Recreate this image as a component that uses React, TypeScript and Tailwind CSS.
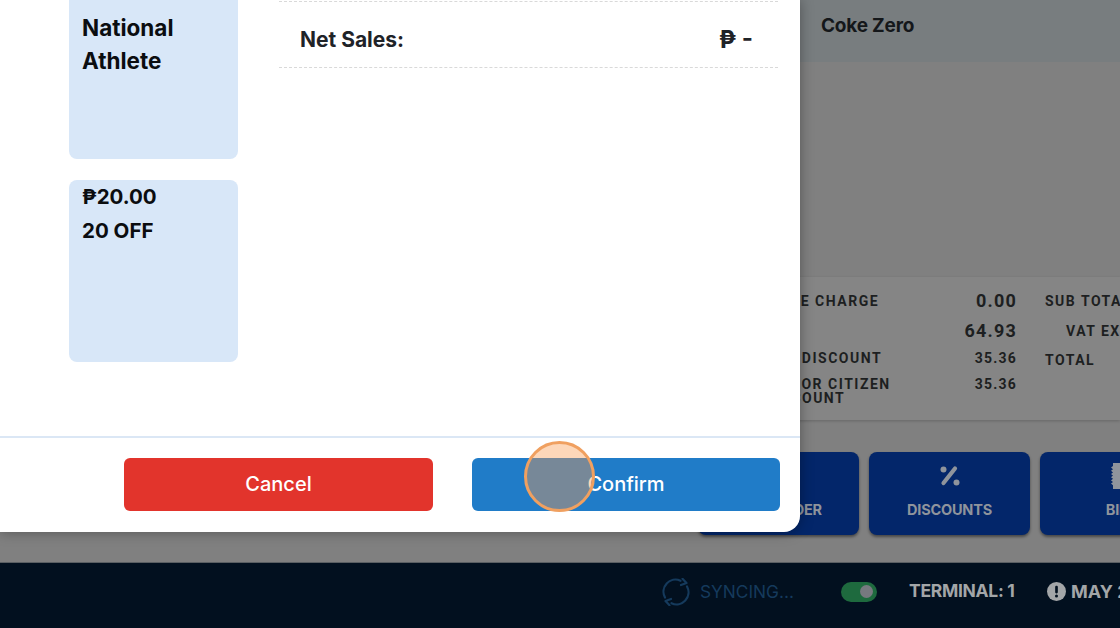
import React from 'react';

const ActionButton: React.FC<{ label: string; icon?: React.ReactNode }> = ({ label, icon }) => (
  <div className="w-[161px] h-[83px] shrink-0 rounded-lg bg-[#03266a] shadow-[0_2px_3px_rgba(0,0,0,0.45)] flex flex-col items-center pt-[11px] gap-[12px]">
    <div className="h-[26px] flex items-center justify-center text-[#8f949c]">{icon}</div>
    <span className="text-[14.5px] leading-[18px] font-bold tracking-[-0.2px] text-[#8f949c] whitespace-nowrap">{label}</span>
  </div>
);

const SummaryRow: React.FC<{ label: React.ReactNode; value: string; big?: boolean; className?: string }> = ({ label, value, big, className }) => (
  <div className={`flex items-start ${className ?? ''}`}>
    <span className="w-[165px] shrink-0 text-[14px] leading-[14px] font-bold tracking-[1.5px] text-[#1d1f21] whitespace-nowrap">{label}</span>
    <span className={`w-[87px] text-right font-bold text-[#1d1f21] ${big ? 'text-[18px] leading-[18px] tracking-[1.2px]' : 'text-[14px] leading-[14px] tracking-[1.2px]'}`}>{value}</span>
  </div>
);

const DiscountCard: React.FC<{ lines: string[]; className: string }> = ({ lines, className }) => (
  <div className={`h-[182px] rounded-lg bg-[#d8e7f8] px-[13px] leading-[33.5px] font-bold text-[#0b0d10] ${className}`}>
    {lines.map((l, i) => <div key={i}>{l}</div>)}
  </div>
);

export default function App() {
  return (
    <div className="relative w-[1120px] h-[628px] overflow-hidden flex flex-col bg-[#808080] font-['Inter',sans-serif]">
      {/* page behind the dialog */}
      <div className="h-[62px] shrink-0 bg-[#787d7f] pl-[821px] pt-[12px]">
        <span className="text-[19px] leading-[28px] font-bold tracking-[-0.2px] text-[#14171a]">Coke Zero</span>
      </div>

      <div className="flex-1 flex flex-col pl-[765px]">
        <div className="mt-[215px] h-[143px] shrink-0 bg-[#858585] shadow-[0_1px_3px_rgba(0,0,0,0.2)] font-['Roboto',sans-serif] pt-[15px] flex">
          <div className="flex flex-col">
            <SummaryRow label={<span className="-ml-[21px] relative top-[2px]">SERVICE CHARGE</span>} value="0.00" big className="h-[30px]" />
            <SummaryRow label="VAT" value="64.93" big className="h-[28px]" />
            <SummaryRow label={<span className="-ml-[3px]">PWD DISCOUNT</span>} value="35.36" className="h-[27px] pt-px" />
            <SummaryRow label={<>SENIOR CITIZEN<br />DISCOUNT</>} value="35.36" />
          </div>
          <div className="ml-[28px] text-[14px] leading-[14px] font-bold tracking-[1.5px] text-[#1d1f21] whitespace-nowrap">
            <div className="h-[30px] pt-[2px]">SUB TOTAL</div>
            <div className="h-[29px] pt-[2px] pl-[21px]">VAT EXEMPT</div>
            <div className="pt-[2px]">TOTAL</div>
          </div>
        </div>

        <div className="mt-[32px] flex gap-[10px] -ml-[67px]">
          <ActionButton label="VOID ORDER" />
          <ActionButton
            label="DISCOUNTS"
            icon={
              <svg width="22" height="22" viewBox="0 0 22 22" fill="currentColor">
                <circle cx="4.5" cy="4.5" r="3" />
                <circle cx="17.5" cy="17.5" r="3" />
                <path d="M16 3.5 4.5 18" stroke="currentColor" strokeWidth="4.2" strokeLinecap="round" />
              </svg>
            }
          />
          <ActionButton
            label="BILL"
            icon={
              <svg width="20" height="26" viewBox="0 0 20 26" fill="currentColor">
                <path d="M2 0h16v3l2 1.6L18 6.200l2 1.600L18 9.400l2 1.600L18 12.600l2 1.600L18 15.800l2 1.600L18 19l2 1.600L18 22.200V26H2v-3.800L0 20.600 2 19 0 17.400l2-1.600L0 14.200l2-1.600L0 11l2-1.600L0 7.800l2-1.600L0 4.600 2 3z" />
              </svg>
            }
          />
        </div>
      </div>

      <div className="h-[66px] shrink-0 bg-[#02101f] border-t border-[#5a5f63] flex items-center pl-[662px] pb-[8px] whitespace-nowrap">
        <svg width="28" height="28" viewBox="0 0 28 28" fill="none" stroke="#153a5c" strokeWidth="2.2" strokeLinecap="round" strokeLinejoin="round" className="shrink-0">
          <path d="M3 19.500A12 12 0 0 1 18.500 2.800" />
          <path d="M25 8.500A12 12 0 0 1 9.500 25.200" />
          <path d="M20.500 0.800 24.500 5 19 7" />
          <path d="M7.500 27.200 3.500 23 9 21" />
        </svg>
        <span className="ml-[10px] w-[141px] shrink-0 text-[17.3px] font-normal text-[#153a5c]">SYNCING...</span>
        <div className="w-[36px] h-[20px] shrink-0 rounded-full bg-[#1e6a3e] flex items-center justify-end pr-[4px]">
          <div className="w-[13px] h-[13px] rounded-full bg-[#77797f]" />
        </div>
        <span className="ml-[32px] w-[106px] shrink-0 text-[17.5px] font-bold tracking-[-0.3px] text-[#a3a6a8]">TERMINAL: 1</span>
        <svg width="19" height="19" viewBox="0 0 20 20" className="ml-[32px] shrink-0">
          <circle cx="10" cy="10" r="10" fill="#a3a6a8" />
          <rect x="8.600" y="4" width="2.800" height="8" rx="1.200" fill="#02101f" />
          <circle cx="10" cy="14.800" r="1.600" fill="#02101f" />
        </svg>
        <span className="ml-[5px] shrink-0 text-[18px] font-bold text-[#a3a6a8]">MAY 2</span>
      </div>

      {/* dialog */}
      <div className="absolute left-0 top-0 w-[800px] h-[532px] bg-white rounded-br-[16px] shadow-[0_0_14px_rgba(0,0,0,0.35)] flex flex-col">
        <div className="h-[436px] shrink-0 overflow-hidden flex gap-[41px] pl-[69px]">
          <div className="w-[169px] shrink-0 flex flex-col gap-[21px] -mt-[23px]">
            <DiscountCard lines={['\u00a0', 'National', 'Athlete']} className="text-[22.5px]" />
            <DiscountCard lines={['₱20.00', '20 OFF']} className="text-[20.5px]" />
          </div>
          <div className="w-[499px]">
            <div className="mt-px h-[67px] border-y border-dashed border-[#d9d9d9] flex items-center justify-between pl-[21px] pr-[25px] pt-[10px] text-[21px] font-bold text-[#1f2328]">
              <span>Net Sales:</span>
              <span className="text-[24px] leading-[24px]">₱ -</span>
            </div>
          </div>
        </div>
        <div className="flex-1 border-t-2 border-[#dbe7f5] flex justify-end gap-[39px] pr-[20px] pt-[20px]">
          <button className="w-[309px] h-[53px] pb-px rounded-md bg-[#e2342c] text-white text-[20px] font-medium">Cancel</button>
          <button className="w-[308px] h-[53px] pb-px rounded-md bg-[#207cc8] text-white text-[20px] font-medium">Confirm</button>
        </div>
      </div>

      {/* click marker */}
      <div className="absolute left-[524px] top-[441px] w-[71px] h-[71px] rounded-full border-[3px] border-[#f0a060] bg-[#fa9b4f]/40" />
    </div>
  );
}
